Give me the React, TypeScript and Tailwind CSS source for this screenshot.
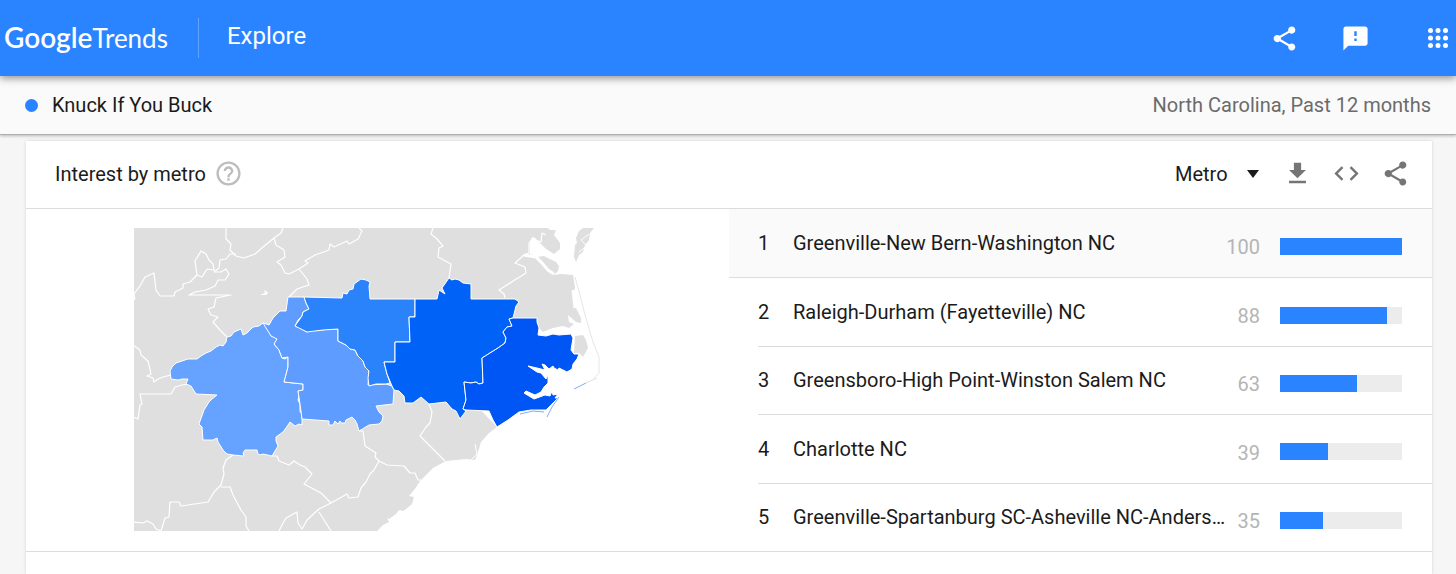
import { useState } from "react";
import {
  MdCode,
  MdFeedback,
  MdGetApp,
  MdHelpOutline,
  MdShare,
} from "react-icons/md";

const metros = [
  { name: "Greenville-New Bern-Washington NC", value: 100 },
  { name: "Raleigh-Durham (Fayetteville) NC", value: 88 },
  { name: "Greensboro-High Point-Winston Salem NC", value: 63 },
  { name: "Charlotte NC", value: 39 },
  { name: "Greenville-Spartanburg SC-Asheville NC-Anders…", value: 35 },
];

/* Shaded metro areas, lightest first */
const regions = [
  {
    name: "Greenville-Spartanburg SC-Asheville NC",
    fill: "#66a2ff",
    points:
      "170,379 169,371 171,367 175,363 181,361 187,359 196,359 200,356 205,353 210,351 215,347 219,345 222,346 225,342 226,337 230,336 233,332 240,329 242,335 246,333 249,330 252,327 258,326 262,323 267,327 269,332 270,336 275,337 276,341 273,344 278,350 281,358 284,359 287,357 287,367 284,379 283,382 302,384 302,390 297,391 298,396 297,400 299,404 299,412 301,413 301,425 298,424 294,426 289,422 285,428 282,432 275,437 275,441 277,446 274,451 271,456 262,454 259,455 257,454 256,450 244,450 242,453 243,456 232,455 226,454 222,450 217,442 216,438 212,440 202,440 201,427 198,424 203,410 208,402 211,399 216,395 195,394 190,386 185,384 187,379 181,379 177,380",
  },
  {
    name: "Charlotte NC",
    fill: "#5e9dff",
    points:
      "262,323 268,325 272,318 275,315 279,311 285,311 287,297 303,297 305,303 308,309 302,312 301,316 297,320 294,326 299,328 306,332 310,330 322,330 325,329 337,329 337,341 345,345 349,349 354,350 357,356 362,361 364,367 368,371 367,385 385,384 391,386 393,390 392,404 375,406 378,412 382,416 381,421 378,424 368,425 358,431 356,424 354,420 351,417 345,420 344,423 340,423 339,421 337,424 334,421 332,425 328,425 328,421 301,419 299,404 297,391 302,390 302,384 283,382 287,367 287,357 281,358 278,350 273,344 276,339 270,336",
  },
  {
    name: "Greensboro-High Point-Winston Salem NC",
    fill: "#2b83fb",
    points:
      "303,297 341,298 342,293 346,294 348,290 352,289 353,284 360,279 365,280 369,282 368,286 369,299 414,299 414,317 408,317 409,342 394,342 394,362 383,362 386,374 389,383 385,384 375,384 368,386 367,378 368,371 364,367 362,361 357,356 354,350 349,349 345,345 337,341 337,329 322,330 306,332 294,326 301,316 302,312 308,309 305,303",
  },
  {
    name: "Raleigh-Durham (Fayetteville) NC",
    fill: "#0062f7",
    points:
      "414,299 436,299 438,290 444,294 441,288 448,278 451,280 454,279 458,280 462,283 470,284 470,299 514,299 518,302 515,306 512,318 508,319 511,326 506,327 502,332 505,338 504,343 497,348 481,358 482,383 478,384 475,382 470,383 463,382 465,400 462,409 465,411 459,419 455,411 451,409 445,402 428,404 420,397 412,403 404,403 403,396 398,391 393,390 391,386 386,374 383,362 394,362 394,342 409,342 408,317 414,317",
  },
  {
    name: "Greenville-New Bern-Washington NC",
    fill: "#0055f5",
    points:
      "512,318 536,318 536,322 538,328 537,335 545,336 552,334 558,335 570,334 572,338 570,350 573,354 578,354 576,359 572,364 571,369 566,372 562,370 558,368 557,370 553,368 552,366 548,369 544,365 541,364 544,370 536,368 527,366 536,372 540,373 545,379 547,375 547,383 543,387 540,392 534,395 525,391 523,393 533,399 544,395 549,396 551,391 552,395 557,394 554,398 557,398 553,402 549,406 545,410 530,410 518,412 507,420 496,427 492,420 488,411 465,410 462,409 465,400 463,382 470,383 475,382 478,384 482,383 481,358 497,348 504,343 505,338 502,332 506,327 511,326 508,319",
  },
];

/* Borders between the metros that have no data */
const borders = [
  "225,228 225,239 230,244 229,250 235,256 243,258 254,254 262,247 273,238 280,233 282,228",
  "273,238 275,245 283,250 284,257 276,262 280,265 284,273 288,274 298,269 307,263 304,261 314,255 328,250 329,244 333,247 346,241 348,244 357,239 361,231 358,228",
  "298,269 306,279 308,285 296,289 288,297",
  "196,275 194,261 200,251 205,254 208,260 212,264 213,270 206,269 201,277 196,275",
  "235,254 229,254 225,259 219,260 218,268 213,272",
  "213,272 220,272 225,269 228,274 224,280 217,280 214,286 205,290 194,292 188,295 230,295 215,298 213,307 207,309 210,315 217,317 212,322 219,330 226,337",
  "196,275 189,282 182,284 182,288 174,292 173,296 159,296 155,290 153,273 144,277 139,286 133,294 134,300",
  "132,345 139,350 140,355 147,361 150,374 146,376 152,378 153,382 157,379 162,377 170,375",
  "132,417 137,419 139,405 141,404 139,394 170,394 174,387 181,385 188,384",
  "232,455 225,460 222,468 223,474 220,485 213,492 207,502 180,506 178,502 169,502 168,517 164,518 160,531 155,529 152,524 146,521 142,523 132,522",
  "220,487 229,487 232,495 240,510 245,517 245,526 248,531",
  "271,456 276,456 278,461 288,465 293,461 299,465 304,467 311,474 303,484 320,493 330,503",
  "330,503 318,509 306,520 301,529 297,523 296,512 285,518 282,523 278,531",
  "330,503 346,494 348,498 357,497 360,488 365,482 369,474 373,470 378,461 374,457 375,453 364,446 362,431 358,431",
  "378,461 386,465 403,466 409,473 414,473 417,480 420,480",
  "428,404 431,412 429,423 425,427 419,436 444,461",
  "318,512 330,531",
  "448,278 450,264 437,257 438,248 442,246 436,239 430,234 432,228",
  "504,298 503,294 498,290 525,273 524,267 514,263 523,255 528,253 528,243 532,239 540,242 541,233 545,235",
];

function MetroMap() {
  return (
    <svg
      viewBox="133 228 488 303"
      className="w-[488px] max-w-full"
      role="img"
      aria-label="Map of interest by metro in North Carolina"
    >
      <path
        fill="#dfdfdf"
        d="M132 228H547L549 230H555L553 235L559 243V249L553 254L545 249L538 242L531 237L529 242L529 254L536 257L543 256L549 259L555 262L558 266L557 271L553 275L560 274L572 275L574 287L572 298L575 308L580 318L580 323L575 322L567 315L568 322L573 324L568 328L562 326L552 328L542 332L538 328L536 318L500 330L470 400L496 427L488 433L480 442L478 449L474 460L465 459L445 461L432 468L420 480L413 490L408 496L413 497L411 504L405 509L402 511L398 510L395 514L388 519L386 518L388 522L382 525L376 531H132Z"
      />
      {/* Eastern shore and Roanoke sound */}
      <path
        fill="#dfdfdf"
        d="M578 231L582 228H593L589 233L588 240L584 245L582 252L578 255L575 262L573 257L574 245L576 243L575 238ZM574 336L582 335L585 340L587 348L582 357L578 353L573 353Z"
      />
      {/* Inlets and rivers */}
      <g fill="none" stroke="#fff">
        <path
          strokeWidth="3"
          d="M532 238L546 253L558 258M523 255L535 257L541 263L547 270L553 274M572 290L574 308"
        />
        <path strokeWidth="1" d="M588 234L580 240L586 246L578 252M474 444L476 454L470 460" />
      </g>
      <g fill="none" stroke="#fff" strokeWidth="1.2" strokeLinejoin="round">
        {borders.map((points) => (
          <polyline key={points} points={points} />
        ))}
      </g>
      {regions.map((region) => (
        <polygon
          key={region.name}
          points={region.points}
          fill={region.fill}
          stroke="#fff"
          strokeWidth="1"
          strokeLinejoin="round"
        />
      ))}
      <path fill="#fff" d="M259 295L264 293L263 290L265 291L267 293L265 295Z" />
      {/* Outer banks */}
      <g fill="none" strokeWidth="1">
        <path stroke="#e6e6e6" d="M574 277L579 295L584 315L592 342L598 357L598 373L593 378" />
        <path stroke="#dfdfdf" d="M596 378L585 383" />
        <path stroke="#7fadfa" d="M585 383L573 389M558 397L551 407L546 417M519 414L532 411L543 412" />
      </g>
    </svg>
  );
}

export default function App() {
  const [resolution, setResolution] = useState("Metro");

  return (
    <div className="min-h-screen flex flex-col bg-[#f6f6f6] font-[Roboto,sans-serif] text-xl text-[#1b1b1b]">
      {/* Top bar */}
      <header className="relative z-20 h-19 flex items-center justify-between bg-[#2a84ff] pl-1 pr-2 text-white shadow-[0_2px_8px_rgba(0,0,0,0.45)]">
        <div className="flex items-center">
          <a href="#" className="flex items-baseline font-[Lato,sans-serif]">
            <span className="text-[28px] font-semibold">Google</span>
            <span className="text-[26px]">Trends</span>
          </a>
          <div className="ml-[30px] h-10 w-px bg-white/25" />
          <h1 className="ml-7 pb-1 text-2xl">Explore</h1>
        </div>
        <div className="flex items-center">
          <button aria-label="Share" className="cursor-pointer">
            <MdShare className="size-[29px]" />
          </button>
          <button aria-label="Send feedback" className="ml-[42px] cursor-pointer">
            <MdFeedback className="size-[29px]" />
          </button>
          <button aria-label="Google apps" className="ml-[58px] cursor-pointer">
            <svg viewBox="0 0 20 20" className="size-5" fill="currentColor">
              {[2.5, 10, 17.5].map((y) =>
                [2.5, 10, 17.5].map((x) => (
                  <circle key={`${x}-${y}`} cx={x} cy={y} r="2.5" />
                ))
              )}
            </svg>
          </button>
        </div>
      </header>

      {/* Search term */}
      <div className="relative z-10 h-[59px] flex items-center justify-between border-b border-[#b0b0b0] bg-[#fafafa] px-[25px] shadow-[0_1px_3px_rgba(0,0,0,0.25)]">
        <div className="flex items-center gap-[14px]">
          <span className="size-[13px] rounded-full bg-[#2a84ff]" />
          <span>Knuck If You Buck</span>
        </div>
        <span className="text-[#6b6b6b]">North Carolina, Past 12 months</span>
      </div>

      <main className="ml-[26px] mr-6 mt-[6px] flex-1 bg-white shadow-[0_0_3px_rgba(0,0,0,0.15)]">
        <div className="h-17 flex items-center justify-between border-b border-[#dcdcdc] pb-0.5 pl-[29px] pr-[22px]">
          <div className="flex items-center gap-2">
            <h2>Interest by metro</h2>
            <button aria-label="Help" className="cursor-pointer text-[#bdbdbd]">
              <MdHelpOutline className="size-[29px]" />
            </button>
          </div>
          <div className="flex items-center gap-5 text-[#757575]">
            <div className="relative flex items-center text-[#1b1b1b]">
              <select
                aria-label="Resolution"
                className="w-[88px] cursor-pointer appearance-none bg-transparent outline-none"
                value={resolution}
                onChange={(e) => setResolution(e.target.value)}
              >
                <option>Metro</option>
                <option>City</option>
              </select>
              <svg
                viewBox="0 0 12 8"
                className="pointer-events-none absolute right-1 w-3"
                fill="currentColor"
              >
                <path d="M0 0h12L6 8z" />
              </svg>
            </div>
            <button aria-label="Download CSV" className="cursor-pointer">
              <MdGetApp className="size-[29px]" />
            </button>
            <button aria-label="Embed" className="cursor-pointer">
              <MdCode className="size-[29px]" />
            </button>
            <button aria-label="Share" className="cursor-pointer">
              <MdShare className="size-[29px]" />
            </button>
          </div>
        </div>

        <div className="grid grid-cols-2 border-b border-[#dcdcdc]">
          <div className="flex items-center justify-center pb-0.5">
            <MetroMap />
          </div>
          <ol className="h-[342px] grid grid-cols-1 grid-rows-5">
            {metros.map((metro, index) => (
              <li
                key={metro.name}
                className={`flex pl-[29px] ${index === 0 ? "bg-[#fafafa]" : ""} ${
                  index === 1 ? "border-t border-[#dcdcdc]" : ""
                }`}
              >
                <div
                  className={`flex flex-1 min-w-0 items-center pr-[30px] ${
                    index > 1 ? "border-t border-[#dcdcdc]" : ""
                  }`}
                >
                  <span className="w-[35px]">{index + 1}</span>
                  <span className="flex-1 truncate">{metro.name}</span>
                  <span className="w-[34px] pt-2 text-right text-[#b5b5b5]">
                    {metro.value}
                  </span>
                  <div className="ml-5 mt-1.5 h-[17px] w-[122px] bg-[#ececec]">
                    <div
                      className="h-full bg-[#2a84ff]"
                      style={{ width: `${metro.value}%` }}
                    />
                  </div>
                </div>
              </li>
            ))}
          </ol>
        </div>
      </main>
    </div>
  );
}
